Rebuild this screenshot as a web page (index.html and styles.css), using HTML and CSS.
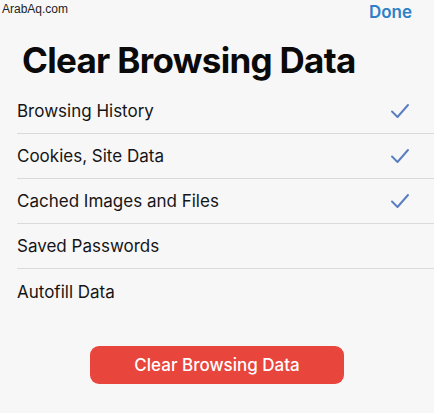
FILE: index.html
```html
<!DOCTYPE html>
<html lang="en">

<head>
  <meta charset="UTF-8">
  <meta content="width=device-width, initial-scale=1.0" name="viewport">
  <title>Clear Browsing Data</title>
  <link rel="stylesheet" href="styles.css">
</head>

<body>

<div class="sheet">
  <div class="sheet-top">
    <span class="watermark">ArabAq.com</span>
    <button class="done-button" type="button">Done</button>
  </div>

  <h1 class="sheet-title">Clear Browsing Data</h1>

  <ul class="data-list">
    <li class="data-row">
      <span>Browsing History</span>
      <svg class="check" viewBox="0 0 20 16"><path d="M2 8.5 L7.5 14 L18 2"/></svg>
    </li>
    <li class="data-row">
      <span>Cookies, Site Data</span>
      <svg class="check" viewBox="0 0 20 16"><path d="M2 8.5 L7.5 14 L18 2"/></svg>
    </li>
    <li class="data-row">
      <span>Cached Images and Files</span>
      <svg class="check" viewBox="0 0 20 16"><path d="M2 8.5 L7.5 14 L18 2"/></svg>
    </li>
    <li class="data-row">
      <span>Saved Passwords</span>
    </li>
    <li class="data-row">
      <span>Autofill Data</span>
    </li>
  </ul>

  <div class="action">
    <button class="clear-button" type="button">Clear Browsing Data</button>
  </div>
</div>

</body>
</html>
```

FILE: styles.css
```css
* {
  margin: 0;
  padding: 0;
  box-sizing: border-box;
}

body {
  background-color: #f8f7f8;
  font-family: Inter, 'Noto Sans', sans-serif;
  color: #111;
}

.sheet {
  width: 434px;
  height: 413px;
}

.sheet-top {
  height: 24px;
  display: flex;
  align-items: flex-start;
  justify-content: space-between;
}

.watermark {
  font-family: 'Liberation Sans', sans-serif;
  font-size: 12px;
  color: #222;
  padding: 2px 0 0 2px;
}

.done-button {
  font-family: Inter, sans-serif;
  font-size: 17px;
  font-weight: 600;
  color: #2f80c7;
  background: none;
  border: none;
  padding: 2px 22px 0 0;
}

.sheet-title {
  font-size: 35px;
  font-weight: 700;
  letter-spacing: -0.7px;
  color: #0a0a0a;
  padding: 15px 0 0 22px;
  height: 65px;
}

.data-list {
  list-style: none;
  padding-left: 17px;
}

.data-row {
  height: 45px;
  display: flex;
  align-items: center;
  justify-content: space-between;
  padding-right: 24px;
  font-size: 17px;
  color: #151515;
  border-bottom: 1px solid #dad9db;
}

.data-row:last-child {
  border-bottom: none;
}

.check {
  width: 20px;
  height: 16px;
  fill: none;
  stroke: #5a7fc0;
  stroke-width: 2;
  stroke-linecap: round;
  stroke-linejoin: round;
}

.action {
  display: flex;
  justify-content: center;
  padding: 32px 0 0 0;
}

.clear-button {
  width: 254px;
  height: 38px;
  border: none;
  border-radius: 9px;
  background-color: #e8453c;
  color: #fff;
  font-family: Inter, sans-serif;
  font-size: 17px;
  font-weight: 500;
}
```
